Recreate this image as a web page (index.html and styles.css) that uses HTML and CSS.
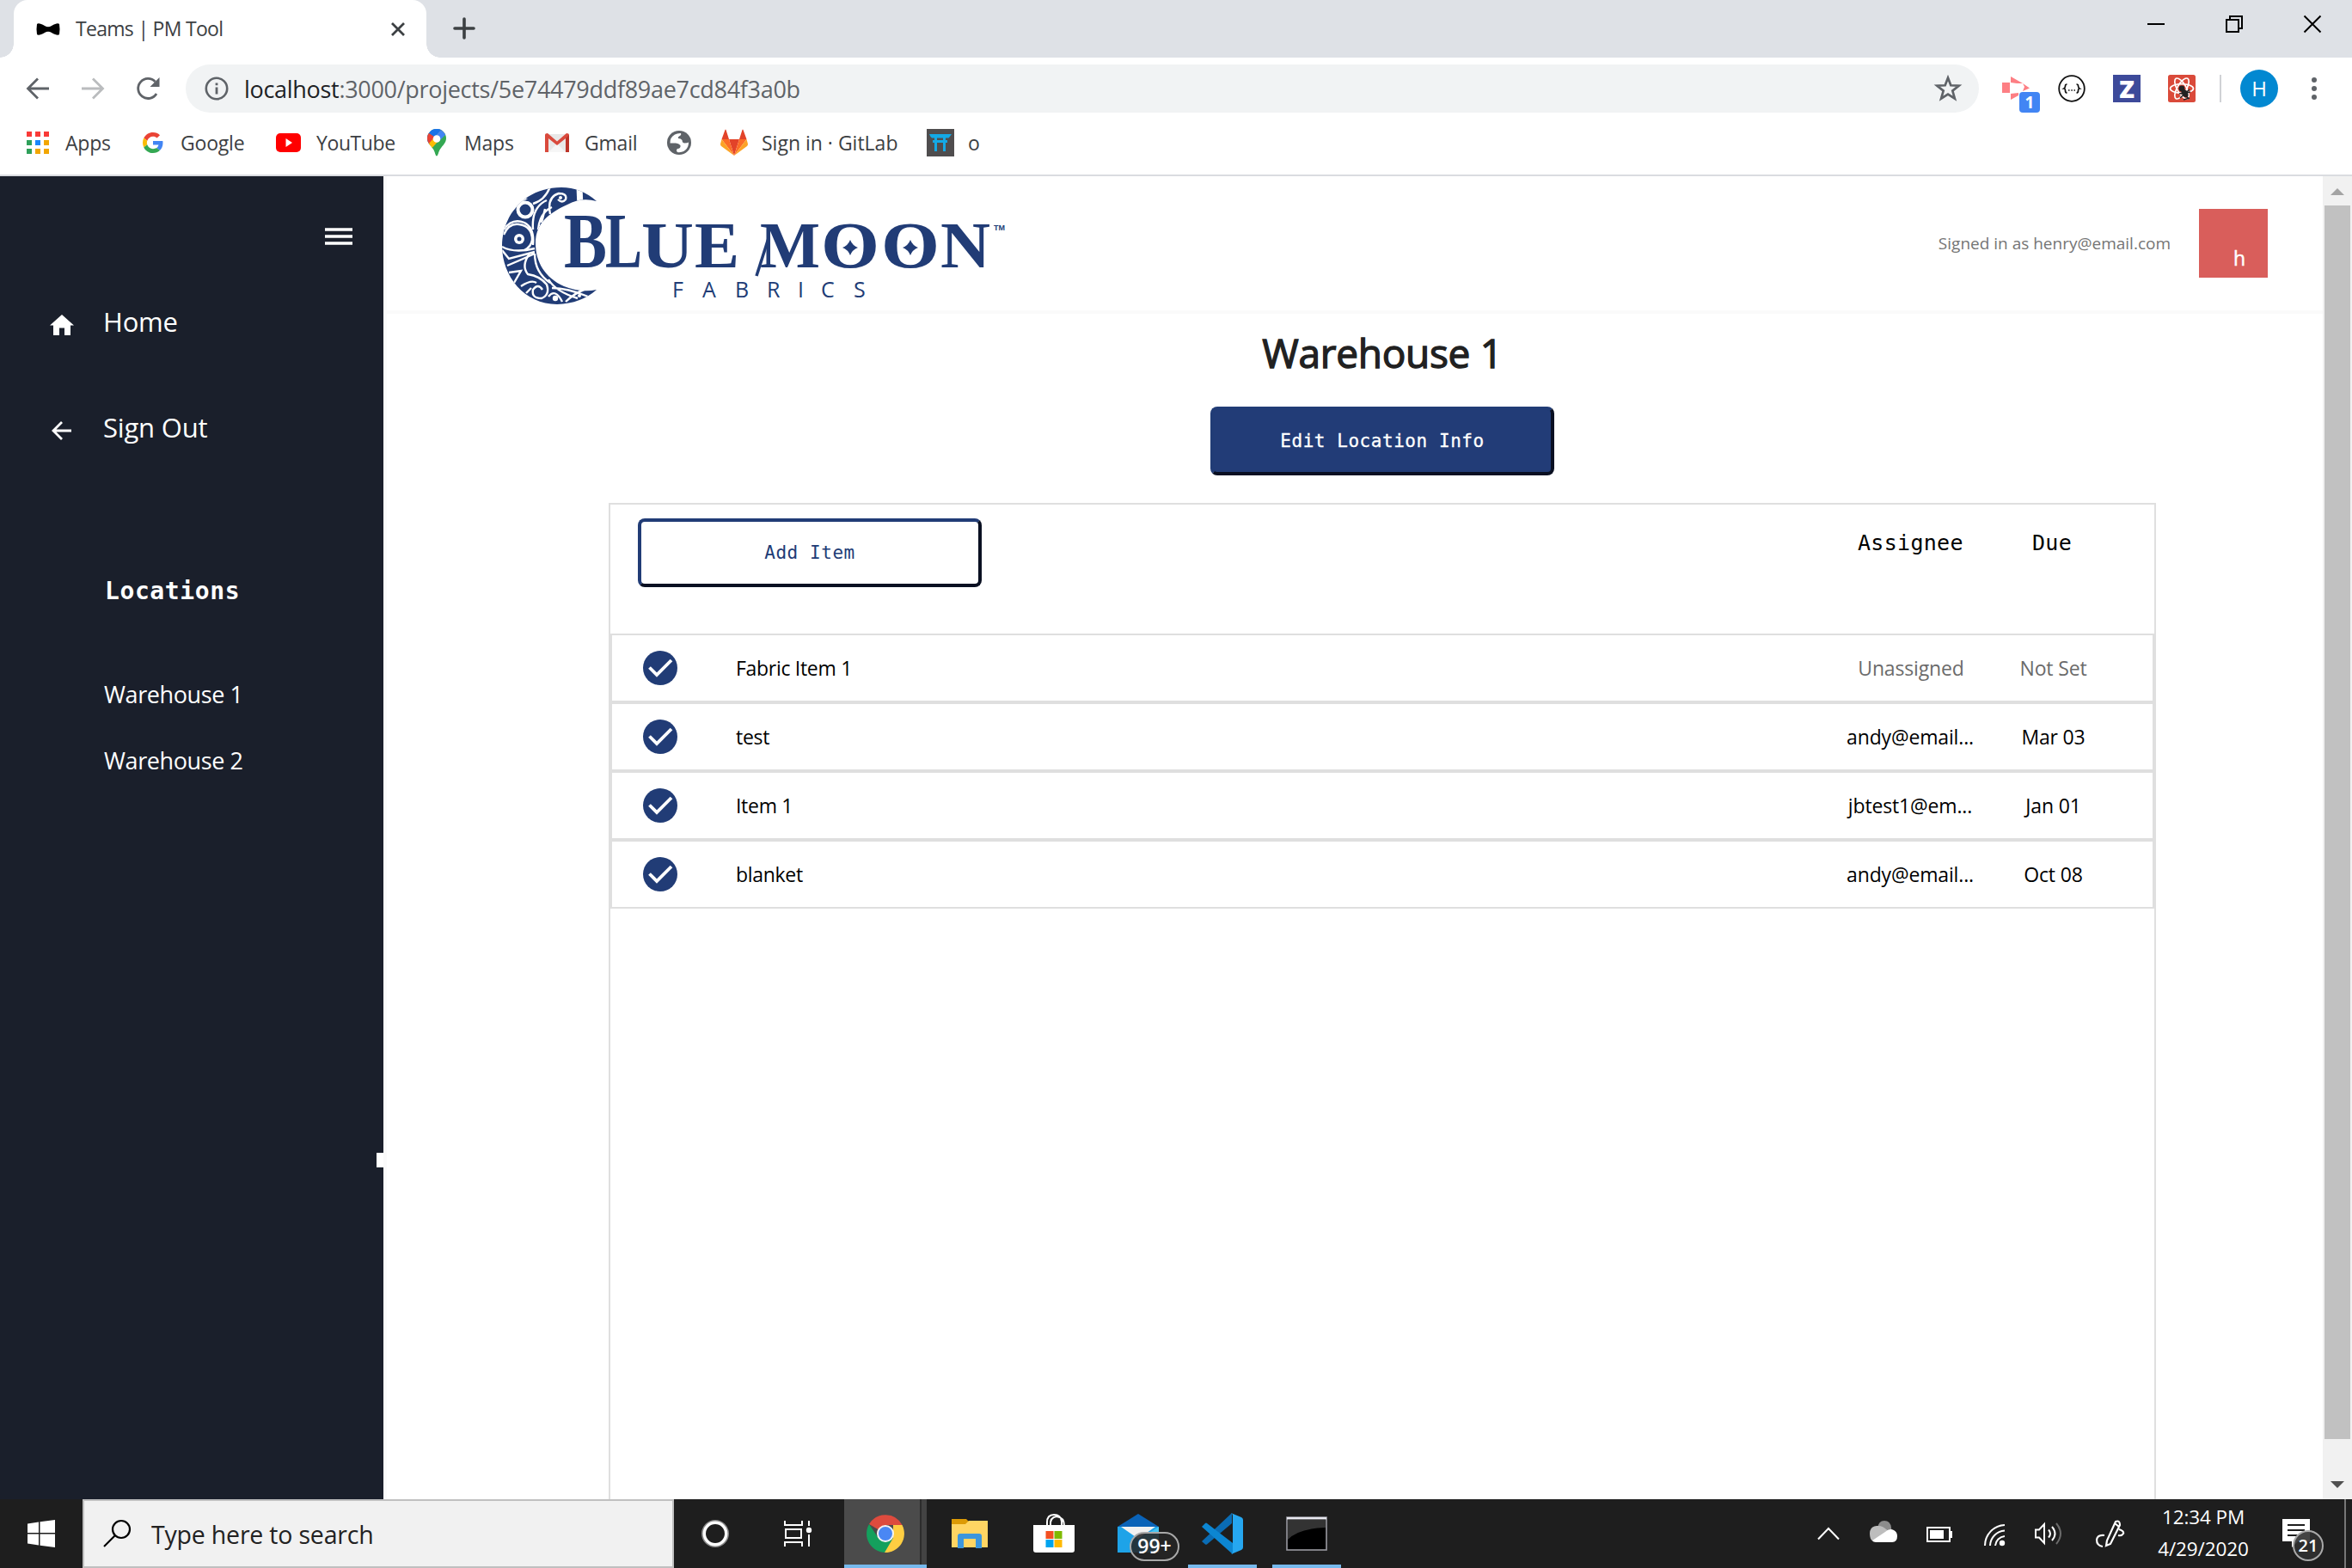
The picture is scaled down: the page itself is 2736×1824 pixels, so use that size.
FILE: index.html
```html
<!DOCTYPE html>
<html lang="en">
<head>
<meta charset="utf-8">
<title>Teams | PM Tool</title>
<link rel="stylesheet" href="styles.css">
</head>
<body>
<div class="screen">
  <div class="tabstrip">
    <div class="tab">
      <svg class="favicon" width="28" height="16" viewBox="0 0 28 16"><path d="M1 2Q0 8 1 14Q3 16 10 12Q14 9.500 18 12Q25 16 27 14Q28 8 27 2Q25 0 18 4Q14 6.500 10 4Q3 0 1 2Z" fill="#000"/></svg>
      <span class="tab-title">Teams | PM Tool</span>
      <svg class="tab-close" width="18" height="18" viewBox="0 0 18 18"><path d="M2 2L16 16M16 2L2 16" stroke="#3c4043" stroke-width="2.800"/></svg>
    </div>
    <svg class="new-tab" width="24" height="24" viewBox="0 0 24 24"><path d="M12 1V23M1 12H23" stroke="#3c4043" stroke-width="3.600" stroke-linecap="round"/></svg>
    <div class="window-controls">
      <svg width="20" height="20" viewBox="0 0 20 20"><path d="M0 10H20" stroke="#000" stroke-width="2"/></svg>
      <svg width="20" height="20" viewBox="0 0 20 20"><path d="M1 5H15V19H1ZM5 5V1H19V15H15" fill="none" stroke="#000" stroke-width="2"/></svg>
      <svg width="20" height="20" viewBox="0 0 20 20"><path d="M0.500 0.500L19.500 19.500M19.500 0.500L0.500 19.500" stroke="#000" stroke-width="2"/></svg>
    </div>
  </div>

  <div class="toolbar">
    <svg class="nav-icon" width="28" height="28" viewBox="0 0 28 28"><path d="M27 14H3M14 2.500L2.500 14L14 25.500" fill="none" stroke="#5f6368" stroke-width="2.800"/></svg>
    <svg class="nav-icon" width="28" height="28" viewBox="0 0 28 28"><path d="M1 14H25M14 2.500L25.500 14L14 25.500" fill="none" stroke="#babcbe" stroke-width="2.800"/></svg>
    <svg class="nav-icon" width="28" height="28" viewBox="0 0 28 28"><path d="M24 20A11.500 11.500 0 1 1 22.500 6" fill="none" stroke="#5f6368" stroke-width="2.800"/><path d="M27.500 1V12H16.500Z" fill="#5f6368"/></svg>
    <div class="omnibox">
      <svg width="28" height="28" viewBox="0 0 28 28"><circle cx="14" cy="14" r="12.200" fill="none" stroke="#5f6368" stroke-width="2.600"/><path d="M14 12.500V20.500M14 7.500V10.300" stroke="#5f6368" stroke-width="2.800"/></svg>
      <span class="url"><b>localhost</b>:3000/projects/5e74479ddf89ae7cd84f3a0b</span>
      <svg class="star" width="32" height="32" viewBox="0 0 32 32"><path d="M16 3.500L19.300 12.300L28.700 12.700L21.300 18.600L23.900 27.700L16 22.500L8.100 27.700L10.700 18.600L3.300 12.700L12.700 12.300Z" fill="none" stroke="#5f6368" stroke-width="2.700"/></svg>
    </div>
    <div class="extensions">
      <div class="ext ext-cast">
        <svg width="34" height="30" viewBox="0 0 34 30"><path d="M1 8H10V20H1ZM11 1L25 9L18 9L11 8ZM25 9L33 14.500L25 18L27 13ZM11 21L20 20L20 23L11 28Z" fill="#fd7f84"/></svg>
        <span class="ext-badge">1</span>
      </div>
      <svg class="ext" width="32" height="32" viewBox="0 0 32 32"><circle cx="16" cy="16" r="14.800" fill="none" stroke="#111" stroke-width="1.800"/><path d="M10.500 11Q8.500 11 8.500 13T7 16Q8.500 16 8.500 18.500T10.500 21M21.500 11Q23.500 11 23.500 13T25 16Q23.500 16 23.500 18.500T21.500 21" fill="none" stroke="#111" stroke-width="1.700"/><path d="M12 18h1.500M15.300 18h1.500M18.500 18h1.500" stroke="#111" stroke-width="1.500"/></svg>
      <span class="ext ext-z">Z</span>
      <svg class="ext" width="32" height="32" viewBox="0 0 32 32"><rect width="32" height="32" rx="2.500" fill="#da4a3a"/><g fill="none" stroke="#fff" stroke-width="1.700"><ellipse cx="16" cy="16" rx="13.500" ry="5.300"/><ellipse cx="16" cy="16" rx="13.500" ry="5.300" transform="rotate(60 16 16)"/><ellipse cx="16" cy="16" rx="13.500" ry="5.300" transform="rotate(120 16 16)"/></g><circle cx="16" cy="16" r="3.400" fill="#222"/><ellipse cx="19.500" cy="21.500" rx="3.400" ry="5.200" transform="rotate(-35 19.500 21.500)" fill="#222"/><path d="M13 22L26 20M14 27L25 17M18 29L25 27M17 19L24 28" stroke="#222" stroke-width="1.400"/></svg>
      <span class="ext-divider"></span>
      <span class="profile">H</span>
      <svg class="kebab" width="6" height="28" viewBox="0 0 6 28"><g fill="#5f6368"><circle cx="3" cy="4" r="3"/><circle cx="3" cy="14" r="3"/><circle cx="3" cy="24" r="3"/></g></svg>
    </div>
  </div>

  <div class="bookmarks">
    <div class="bm bm-apps"><svg width="26" height="26" viewBox="0 0 26 26"><path d="M0 0h6v6H0zM10 0h6v6h-6zM20 0h6v6h-6z" fill="#f93a37"/><path d="M0 10h6v6H0zM0 20h6v6H0z" fill="#2fa05a"/><path d="M10 10h6v6h-6z" fill="#1a87fb"/><path d="M20 10h6v6h-6zM10 20h6v6h-6zM20 20h6v6h-6z" fill="#f2a600"/></svg><span>Apps</span></div>
    <div class="bm bm-google"><svg width="24" height="24" viewBox="0 0 48 48"><path fill="#ea4335" d="M24 9.500c3.540 0 6.710 1.220 9.210 3.600l6.850-6.850C35.900 2.380 30.470 0 24 0 14.620 0 6.510 5.380 2.560 13.220l7.980 6.190C12.430 13.720 17.740 9.500 24 9.500z"/><path fill="#4285f4" d="M46.980 24.550c0-1.570-.15-3.090-.38-4.550H24v9.020h12.940c-.58 2.960-2.260 5.480-4.780 7.180l7.730 6c4.510-4.180 7.090-10.360 7.090-17.650z"/><path fill="#fbbc05" d="M10.530 28.590c-.48-1.450-.76-2.990-.76-4.590s.27-3.140.76-4.590l-7.980-6.190C.92 16.460 0 20.120 0 24s.92 7.540 2.560 10.780l7.970-6.190z"/><path fill="#34a853" d="M24 48c6.480 0 11.930-2.130 15.890-5.810l-7.730-6c-2.150 1.450-4.920 2.300-8.160 2.300-6.260 0-11.570-4.220-13.470-9.910l-7.980 6.190C6.510 42.620 14.620 48 24 48z"/></svg><span>Google</span></div>
    <div class="bm bm-youtube"><svg width="29" height="22" viewBox="0 0 29 22"><rect width="29" height="22" rx="5" fill="#f00"/><path d="M11.500 6L19 11L11.500 16Z" fill="#fff"/></svg><span>YouTube</span></div>
    <div class="bm bm-maps"><svg width="22" height="32" viewBox="0 0 22 32"><clipPath id="pin"><path d="M11 0A11 11 0 0 0 0 11C0 16 4 19 7 23.500C9 26.500 9.500 31.500 11 31.500S13 26.500 15 23.500C18 19 22 16 22 11A11 11 0 0 0 11 0Z"/></clipPath><g clip-path="url(#pin)"><path d="M0 0H22V32H0Z" fill="#34a853"/><path d="M0 22L22 -4H0Z" fill="#1a73e8"/><path d="M-2 2L8 9L4 18H-2Z" fill="#ea4335"/><path d="M1 18L18 -1H22V4L3 25Z" fill="#fbbc04"/><path d="M2.500 3L9 9L17 0H5Z" fill="#1a73e8"/><path d="M17 0L10 8L14 14L24 4V0Z" fill="#4285f4"/></g><circle cx="11" cy="11.500" r="4.300" fill="#fff"/></svg><span>Maps</span></div>
    <div class="bm bm-gmail"><svg width="28" height="22" viewBox="0 0 28 22"><rect x="1" y="1" width="26" height="21" fill="#e8e8e8"/><path d="M4 22L14 12L24 22Z" fill="#f6f6f6"/><path d="M0 2Q0 0 3 0L14 9.500L25 0Q28 0 28 2V22H24V6L14 14L4 6V22H0Z" fill="#d94a3d"/><path d="M24 6L28 2V22H24Z" fill="#bd3429"/></svg><span>Gmail</span></div>
    <div class="bm bm-globe"><svg width="28" height="28" viewBox="0 0 28 28"><circle cx="14" cy="14" r="14" fill="#5f6368"/><path d="M16 3Q17 5 14 6.500Q12 7.500 13 9Q16 9 17.500 11Q17.500 14 20 14.500Q24 14.500 25 13.500A11 11 0 0 1 12 25Q10 23 12 21Q16 21 15.500 17Q13 14 9 14.500L3.500 14.500Q3 8 9 4.500Q12 2.800 16 3Z" fill="#fff"/></svg></div>
    <div class="bm bm-gitlab"><svg width="32" height="30" viewBox="0 0 32 30"><path d="M16 30L10 11H22Z" fill="#e24329"/><path d="M16 30L10 11H1.500ZM16 30L22 11H30.500Z" fill="#fc6d26"/><path d="M1.500 11L0 16.500Q0 18 1 19L16 30ZM30.500 11L32 16.500Q32 18 31 19L16 30Z" fill="#fca326"/><path d="M1.500 11L5.500 0Q6 -1 6.500 0L10 11ZM30.500 11L26.500 0Q26 -1 25.500 0L22 11Z" fill="#e24329"/></svg><span>Sign in · GitLab</span></div>
    <div class="bm bm-o"><svg width="32" height="32" viewBox="0 0 32 32"><rect width="32" height="32" fill="#4f4d4e"/><path d="M3 6H29Q27 9 25.500 10.500H22V13H24V16H22V26H19V16H12V26H9V16H7V13H9V10.500H6Q4 9 3 6ZM12 10.500V13H19V10.500Z" fill="#14a9e5" fill-rule="evenodd"/></svg><span>o</span></div>
  </div>

  <div class="viewport">
    <aside class="sidebar">
      <svg class="burger" width="32" height="20" viewBox="0 0 32 20"><path d="M0 2H32M0 10H32M0 18H32" stroke="#fff" stroke-width="3.600"/></svg>
      <a class="side-link"><svg width="28" height="24" viewBox="0 0 28 24"><path d="M14 0L28 12.500H24V24H17V15.500H11V24H4V12.500H0Z" fill="#fff"/></svg><span>Home</span></a>
      <a class="side-link"><svg width="28" height="24" viewBox="0 0 28 24"><path d="M25 12H5M14 2L4 12L14 22" fill="none" stroke="#fff" stroke-width="2.800"/></svg><span>Sign Out</span></a>
      <h2 class="side-title">Locations</h2>
      <a class="side-loc">Warehouse 1</a>
      <a class="side-loc">Warehouse 2</a>
      <span class="handle"></span>
    </aside>

    <main class="main">
      <header class="header">
        <svg class="logo" width="600" height="140" viewBox="0 0 600 140">
          <clipPath id="crescent"><path d="M110 17Q92 1 69 1C26 1 0 34 0 69S26 137 64 137Q92 136 110 120Q92 124 72 116C50 106 39 88 39 66S52 32 76 21Q92 12 110 17Z"/></clipPath>
          <g clip-path="url(#crescent)">
            <rect width="112" height="140" fill="#213c76"/>
            <g fill="none" stroke="#fff" stroke-width="2.400">
              <circle cx="27" cy="27" r="8.500" stroke-width="4"/>
              <path d="M2 56Q8 42 20 44Q35 46 35 62Q34 70 26 74"/>
              <path d="M2 50Q12 36 26 42Q38 48 36 68M0 70Q14 78 38 72M0 74L8 84L38 76M6 92L20 86L38 78"/>
              <path d="M56 0Q50 16 36 20M56 32Q52 12 66 8Q76 8 74 15Q70 20 65 15M52 16Q34 24 36 50M58 24Q44 30 42 50M50 26L46 42"/>
              <path d="M32 78Q22 92 30 102Q44 104 52 114Q56 126 46 130Q34 130 36 120Q42 112 47 120M38 78Q38 100 56 112M8 100L22 98L14 112M22 116Q34 108 40 112M28 124L34 118"/>
              <path d="M54 108Q62 122 88 130M58 118Q76 118 100 128M54 128Q62 118 70 134M74 134Q84 124 98 119"/>
              <path d="M90 0L91 24" stroke-width="7"/>
            </g>
            <g fill="#fff"><circle cx="20" cy="61" r="6"/><circle cx="68" cy="13" r="2"/><circle cx="62" cy="130" r="3.200"/><circle cx="90" cy="127" r="2"/><path d="M14 12L30 14L20 20L8 34Z"/></g>
            <circle cx="20" cy="61" r="2.500" fill="#213c76"/>
          </g>
          <g class="logo-word">
            <text x="72" y="94" font-size="92" textLength="50" lengthAdjust="spacingAndGlyphs">B</text>
            <text x="120" y="94" font-size="92" textLength="43" lengthAdjust="spacingAndGlyphs">L</text>
            <text x="162" y="94" font-size="76" textLength="61" lengthAdjust="spacingAndGlyphs">U</text>
            <text x="224" y="94" font-size="76" textLength="52" lengthAdjust="spacingAndGlyphs">E</text>
            <text x="300" y="94" font-size="76" textLength="70" lengthAdjust="spacingAndGlyphs">M</text>
            <text x="371" y="94" font-size="76" textLength="68" lengthAdjust="spacingAndGlyphs">O</text>
            <text x="441" y="94" font-size="76" textLength="68" lengthAdjust="spacingAndGlyphs">O</text>
            <text x="510" y="94" font-size="76" textLength="58" lengthAdjust="spacingAndGlyphs">N</text>
          </g>
          <path d="M405 62Q407.500 68.500 414 71Q407.500 73.500 405 80Q402.500 73.500 396 71Q402.500 68.500 405 62ZM475 62Q477.500 68.500 484 71Q477.500 73.500 475 80Q472.500 73.500 466 71Q472.500 68.500 475 62Z" fill="#213c76"/>
          <path d="M310 60L296 104" stroke="#213c76" stroke-width="3.500"/>
          <text class="logo-sub" x="198 233 271 308 344 371 409" y="129">FABRICS</text>
          <text class="logo-tm" x="572" y="51">TM</text>
        </svg>
        <div class="account"><span class="signed">Signed in as henry@email.com</span><span class="user">h</span></div>
      </header>
      <div class="content">
        <h1 class="title">Warehouse 1</h1>
        <button class="btn btn-edit">Edit Location Info</button>
        <section class="board">
          <div class="board-head">
            <button class="btn btn-add">Add Item</button>
            <span class="head-assignee">Assignee</span>
            <span class="head-due">Due</span>
          </div>
          <div class="row muted"><svg class="check" viewBox="0 0 40 40"><circle cx="20" cy="20" r="20" fill="#213c76"/><path d="M7.500 19.500L16 28L33 11" fill="none" stroke="#fff" stroke-width="3.800"/></svg><span class="name">Fabric Item 1</span><span class="who">Unassigned</span><span class="due">Not Set</span></div>
          <div class="row"><svg class="check" viewBox="0 0 40 40"><circle cx="20" cy="20" r="20" fill="#213c76"/><path d="M7.500 19.500L16 28L33 11" fill="none" stroke="#fff" stroke-width="3.800"/></svg><span class="name">test</span><span class="who">andy@email...</span><span class="due">Mar 03</span></div>
          <div class="row"><svg class="check" viewBox="0 0 40 40"><circle cx="20" cy="20" r="20" fill="#213c76"/><path d="M7.500 19.500L16 28L33 11" fill="none" stroke="#fff" stroke-width="3.800"/></svg><span class="name">Item 1</span><span class="who">jbtest1@em...</span><span class="due">Jan 01</span></div>
          <div class="row"><svg class="check" viewBox="0 0 40 40"><circle cx="20" cy="20" r="20" fill="#213c76"/><path d="M7.500 19.500L16 28L33 11" fill="none" stroke="#fff" stroke-width="3.800"/></svg><span class="name">blanket</span><span class="who">andy@email...</span><span class="due">Oct 08</span></div>
        </section>
      </div>
    </main>

    <div class="scrollbar">
      <svg width="16" height="8" viewBox="0 0 16 8"><path d="M0 8L8 0L16 8Z" fill="#a3a3a3"/></svg>
      <div class="thumb"></div>
      <svg width="16" height="8" viewBox="0 0 16 8"><path d="M0 0H16L8 8Z" fill="#505050"/></svg>
    </div>
  </div>

  <footer class="taskbar">
    <div class="start"><svg width="32" height="32" viewBox="0 0 32 32"><path d="M0 4.500L13 2.500V15H0ZM14.500 2.300L32 0V15H14.500ZM0 16.500H13V29.500L0 27.500ZM14.500 16.500H32V32L14.500 29.700Z" fill="#fff"/></svg></div>
    <div class="search"><svg width="32" height="32" viewBox="0 0 32 32"><circle cx="21" cy="11" r="10" fill="none" stroke="#000" stroke-width="2.200"/><path d="M13.500 18.500L1 31" stroke="#000" stroke-width="2.200"/></svg><span>Type here to search</span></div>
    <div class="task task-cortana"><svg width="32" height="32" viewBox="0 0 32 32"><circle cx="16" cy="16" r="14.500" fill="none" stroke="#8a8a8a" stroke-width="3"/><circle cx="16" cy="16" r="12.700" fill="none" stroke="#fff" stroke-width="3.400"/></svg></div>
    <div class="task task-view"><svg width="34" height="32" viewBox="0 0 34 32"><path d="M1 1V6H21V1M1 31V26H21V31M2 11H20V21H2ZM29 1V7M29 17V31" fill="none" stroke="#fff" stroke-width="2"/><circle cx="29" cy="12" r="3.200" fill="#fff"/></svg></div>
    <div class="task task-chrome open"><svg width="44" height="44" viewBox="0 0 44 44"><path d="M22 22L3 11A22 22 0 0 1 41.500 12H22Z" fill="#dd4b3e"/><path d="M3 11A22 22 0 0 0 22 44L31 27L22 22L13 26Z" fill="#14a05d"/><path d="M41.500 12A22 22 0 0 1 21 44L31 27V12Z" fill="#ffce42"/><circle cx="22" cy="22" r="10" fill="#f4f4f4"/><circle cx="22" cy="22" r="8" fill="#4a87f4"/></svg></div>
    <div class="task task-folder"><svg width="42" height="36" viewBox="0 0 42 36"><path d="M0 1H17L20 4V8H0Z" fill="#dc9a05"/><path d="M0 7H16L20 3H42V34H0Z" fill="#ffd563"/><path d="M7 34V21Q7 18 10 18H32Q35 18 35 21V35H28V24H14V35H7Z" fill="#3c96dd"/></svg></div>
    <div class="task task-store"><svg width="48" height="46" viewBox="0 0 48 46"><path d="M16 14V10Q16 1 24 1T33 9V14M20 14Q19 4 27 3Q36 4 36 14" fill="none" stroke="#fff" stroke-width="2"/><path d="M0 13H48V42Q48 45 45 45H3Q0 45 0 42Z" fill="#fff"/><path d="M14.500 20h9v9h-9z" fill="#f25022"/><path d="M24.500 20h9v9h-9z" fill="#7fba00"/><path d="M14.500 30h9v9h-9z" fill="#00a4ef"/><path d="M24.500 30h9v9h-9z" fill="#ffb900"/></svg></div>
    <div class="task task-mail"><svg width="48" height="46" viewBox="0 0 48 46"><path d="M0 15L24 0L48 15Z" fill="#0a63b8"/><path d="M0 15H48V45H0Z" fill="#1ea3e8"/><path d="M48 15V45L24 30Z" fill="#45c5f3"/><path d="M4 15H44L24 29Z" fill="#f1f1f1"/></svg><span class="mail-badge">99+</span></div>
    <div class="task task-code open"><svg width="48" height="48" viewBox="0 0 48 48"><path d="M0 33L35 0V12L6 36.500Q5 37 4 36.500L0 33Z" fill="#0a6cb4"/><path d="M4 12Q5 11 6 12L36 35V48L0 16Z" fill="#0c86d2"/><path d="M34 0L46 5Q48 6 48 8V40Q48 42 46 43L34 48Q36 47 36 45V3Q36 1 34 0Z" fill="#26a7f0"/></svg></div>
    <div class="task task-cmd open"><svg width="48" height="40" viewBox="0 0 48 40"><rect x="1" y="1" width="46" height="38" fill="#000" stroke="#9a9aa2" stroke-width="1.600"/><path d="M1 1H47V3.500H1Z" fill="#e8e8f0"/><path d="M2 4H46V13Q14 14 2 27Z" fill="#333"/></svg></div>
    <div class="tray">
      <svg class="t-chev" width="26" height="16" viewBox="0 0 26 16"><path d="M1 14.500L13 2L25 14.500" fill="none" stroke="#fff" stroke-width="2"/></svg>
      <svg class="t-cloud" width="32" height="26" viewBox="0 0 32 26"><path d="M9 9Q10 0 17 0Q24 0 25 8L26 15H9Z" fill="#8c8c8c"/><path d="M8 6Q0 7 0 15Q0 22 4 24L22 13Q16 5 8 6Z" fill="#bdbdbd"/><path d="M3 23L18 13Q23 8 28 11Q32 13 32 18Q32 25 26 25H7Q4 25 3 23Z" fill="#fff"/></svg>
      <svg class="t-batt" width="30" height="18" viewBox="0 0 30 18"><path d="M1 1H27V17H1Z" fill="none" stroke="#fff" stroke-width="2"/><path d="M4 4H20V14H4ZM28 5H30V13H28Z" fill="#fff"/></svg>
      <svg class="t-wifi" width="25" height="26" viewBox="0 0 25 26"><path d="M1 25A24 24 0 0 1 24 1M7 25A18 18 0 0 1 24 7.500M13 25A12 12 0 0 1 24 14" fill="none" stroke="#fff" stroke-width="2"/><circle cx="21" cy="22" r="3.200" fill="#fff"/></svg>
      <svg class="t-vol" width="32" height="28" viewBox="0 0 32 28"><path d="M1 9.500H5L11 3V25L5 18.500H1Z" fill="none" stroke="#fff" stroke-width="2"/><path d="M16 9.500Q20 14 16 18.500M20 6Q27 14 20 22" fill="none" stroke="#fff" stroke-width="2"/><path d="M25 2Q35 14 25 26" fill="none" stroke="#6b6b6b" stroke-width="2"/></svg>
      <svg class="t-pen" width="34" height="34" viewBox="0 0 34 34"><path d="M10 19Q2 18 1 24Q1 31 8 32M13 25L12 31L17 29L28 7Q28 1 23 3ZM22 5L27 9M27 12Q33 14 32 17Q30 20 26 19" fill="none" stroke="#fff" stroke-width="2.200"/></svg>
      <div class="clock"><span>12:34 PM</span><span>4/29/2020</span></div>
      <div class="notes"><svg width="32" height="34" viewBox="0 0 32 34"><path d="M0 0H32V26H18L11 33V26H0Z" fill="#fff"/><path d="M6 7H26M6 13H26M6 19H20" stroke="#1e1e1e" stroke-width="2"/></svg><span class="note-badge">21</span></div>
      <span class="show-desktop"></span>
    </div>
  </footer>
</div>
</body>
</html>
```
FILE: styles.css
```css
* { box-sizing: border-box; }
body { margin: 0; background: #fff; font-family: "Open Sans", "Noto Sans", sans-serif; color: #000; }
svg { display: block; flex: none; overflow: visible; }
span, a, h1, h2 { white-space: nowrap; }
.screen { width: 2736px; height: 1824px; display: flex; flex-direction: column; overflow: hidden; }

/* browser frame */
.tabstrip { height: 67px; flex: none; background: #dee1e6; display: flex; align-items: flex-start; }
.tab { position: relative; width: 480px; height: 67px; margin-left: 16px; background: #fff; border-radius: 16px 16px 0 0; display: flex; align-items: center; padding: 0 24px 0 26px; }
.tab::before, .tab::after { content: ""; position: absolute; bottom: 0; width: 16px; height: 16px; }
.tab::before { left: -16px; background: radial-gradient(circle at 0 0, transparent 15.500px, #fff 16px); }
.tab::after { right: -16px; background: radial-gradient(circle at 100% 0, transparent 15.500px, #fff 16px); }
.tab-title { margin-left: 18px; font-size: 23px; letter-spacing: -.7px; color: #3c4043; line-height: 30px; margin-top: -2px; }
.tab-close { margin-left: auto; }
.new-tab { margin: 21px 0 0 32px; }
.window-controls { margin: 18px 36px 0 auto; display: flex; gap: 71px; }

.toolbar { height: 72px; flex: none; display: flex; align-items: center; padding-left: 30px; }
.nav-icon { margin-right: 36px; }
.nav-icon:nth-child(3) { margin-right: 30px; }
.omnibox { width: 2086px; height: 56px; border-radius: 28px; background: #f1f3f4; display: flex; align-items: center; padding: 0 20px 0 22px; }
.url { margin-left: 18px; font-size: 27px; letter-spacing: -.3px; color: #5f6368; }
.url b { font-weight: 400; color: #202124; }
.star { margin-left: auto; }
.extensions { display: flex; align-items: center; margin-left: -1px; }
.ext { margin-left: 32px; }
.ext-cast { position: relative; width: 34px; margin-left: 27px; }
.ext-badge { position: absolute; left: 21px; top: 19px; width: 24px; height: 24px; border-radius: 4px; background: #4285f4; color: #fff; font-size: 19px; font-weight: 700; line-height: 25px; text-align: center; }
.ext-z { width: 32px; height: 32px; background: #3d4a9a; color: #fff; font-weight: 800; font-size: 29px; line-height: 31px; text-align: center; }
.ext-divider { width: 2px; height: 32px; background: #d0d2d5; margin-left: 28px; }
.profile { width: 44px; height: 44px; border-radius: 50%; background: #0288d1; color: #fff; margin-left: 22px; font-size: 24px; line-height: 44px; text-align: center; }
.kebab { margin-left: 39px; }

.bookmarks { height: 66px; flex: none; padding-bottom: 10px; border-bottom: 2px solid #dadce0; display: flex; align-items: center; font-size: 23px; letter-spacing: -.2px; color: #3c4043; }
.bm { display: flex; align-items: center; height: 54px; flex: none; }
.bm-apps { padding-left: 31px; width: 166px; gap: 19px; }
.bm-google { width: 155px; gap: 20px; }
.bm-youtube { width: 176px; gap: 18px; letter-spacing: -.4px; }
.bm-maps { width: 137px; gap: 21px; }
.bm-gmail { width: 142px; gap: 18px; }
.bm-globe { width: 62px; }
.bm-gitlab { width: 240px; gap: 16px; letter-spacing: 0; }
.bm-o { gap: 16px; }

/* page */
.viewport { height: 1539px; flex: none; display: flex; overflow: hidden; }
.sidebar { position: relative; width: 446px; flex: none; background: #1a1f2b; color: #fff; display: flex; flex-direction: column; }
.burger { align-self: flex-end; margin: 60px 36px 0 0; }
.side-link { height: 60px; display: flex; align-items: center; padding-left: 58px; font-size: 31px; letter-spacing: -.2px; }
.side-link svg { margin: 7px 34px 0 0; }
.burger + .side-link { margin-top: 59px; }
.side-link + .side-link { margin-top: 63px; }
.side-title { margin: 141px 0 0 122px; font: 700 28px/40px "DejaVu Sans Mono", monospace; letter-spacing: .6px; }
.side-loc { margin-left: 121px; height: 77px; line-height: 77px; font-size: 27px; letter-spacing: -.4px; }
.side-title + .side-loc { margin-top: 61px; }
.handle { position: absolute; right: 0; top: 1136px; width: 8px; height: 17px; background: #fff; }

.main { width: 2256px; flex: none; border-left: 4px solid #fafafa; display: flex; flex-direction: column; }
.header { width: 100%; height: 160px; flex: none; border-bottom: 4px solid #fafafa; display: flex; justify-content: space-between; padding-right: 64px; }
.logo { margin: 12px 0 0 134px; }
.logo-word { font-family: "Liberation Serif", serif; font-weight: 700; fill: #213c76; }
.logo-sub { font: 400 25px "Open Sans", sans-serif; fill: #213c76; }
.logo-tm { font: 700 9px "Liberation Sans", sans-serif; fill: #213c76; }
.account { display: flex; align-items: center; gap: 33px; }
.signed { font-size: 19px; color: #757575; }
.user { width: 80px; height: 80px; background: #d95e5b; color: #fff; font-size: 23px; line-height: 30px; padding: 42px 0 0 14px; text-align: center; -webkit-text-stroke: .5px; }
.content { display: flex; flex-direction: column; align-items: center; padding-left: 64px; }
.title { margin: 15px 0 0; font-size: 46px; font-weight: 400; line-height: 60px; letter-spacing: -.3px; color: #212121; -webkit-text-stroke: 1.300px #212121; }
.btn { width: 400px; height: 80px; flex: none; padding: 0; border: 4px solid; border-color: #213c76 #0a1022 #0a1022 #213c76; border-radius: 8px; font: 400 21px/30px "DejaVu Sans Mono", monospace; letter-spacing: .55px; }
.btn-edit { margin-top: 33px; background: #223c77; color: #fff; -webkit-text-stroke: .3px; }
.btn-add { background: #fff; color: #213c76; }
.board { width: 1800px; height: 1200px; flex: none; margin-top: 32px; border: 2px solid #dfdfdf; }
.board-head { height: 150px; display: flex; padding: 16px 0 0 32px; font: 400 25px/34px "DejaVu Sans Mono", monospace; letter-spacing: .3px; }
.head-assignee { margin: 12px 0 0 1019px; width: 124px; }
.head-due { margin: 12px 0 0 79px; }
.row { height: 80px; border: 2px solid #dfdfdf; display: grid; grid-template-columns: 108px 1fr 150px 170px; align-items: center; padding: 0 37px 0 36px; font-size: 23px; line-height: 32px; letter-spacing: -.15px; }
.check { width: 40px; height: 40px; }
.name { letter-spacing: -.3px; }
.who, .due { text-align: center; }
.due { padding-left: 13px; }
.muted .who, .muted .due { color: #6b6b6b; }
.muted .who { padding-left: 2px; }
.scrollbar { width: 34px; flex: none; background: #f1f1f1; display: flex; flex-direction: column; align-items: center; padding: 14px 0 13px; justify-content: space-between; }
.thumb { width: 30px; height: 1435px; margin-bottom: 37px; background: #c1c1c1; }

/* taskbar */
.taskbar { height: 80px; flex: none; background: #1e1e1e; display: flex; color: #fff; }
.taskbar > div { flex: none; }
.start { width: 96px; display: flex; align-items: center; justify-content: center; }
.search { width: 688px; border: 2px solid #c0c0c0; background: #f1f1f1; color: #222; display: flex; align-items: center; padding-left: 22px; gap: 24px; font-size: 28.500px; letter-spacing: -.2px; }
.search span { margin-top: 2px; }
.task { position: relative; display: flex; align-items: center; justify-content: center; width: 96px; }
.task.open { border-bottom: 4px solid #76b9ed; padding-top: 4px; }
.task-view { padding-left: 2px; }
.task-chrome { margin-left: 6px; background: linear-gradient(90deg, #4b4b4b 88px, #2c2c2c 88px, #2c2c2c 90px, #434343 90px); padding-right: 0; }
.task-folder { margin-left: 2px; }
.task-store { margin-left: 2px; }
.task-mail { margin-left: 2px; }
.mail-badge { position: absolute; left: 38px; top: 38px; width: 58px; height: 34px; border: 2px solid #a9a9a9; border-radius: 17px; background: rgba(38, 38, 38, .88); font-size: 23px; font-weight: 600; line-height: 29px; text-align: center; }
.task-code { width: 80px; margin-left: 10px; }
.task-cmd { width: 80px; margin-left: 18px; }
.tray { display: flex; align-items: center; margin-left: 554px; position: relative; }
.t-cloud { margin: -4px 0 0 35px; }
.t-batt { margin: 2px 0 0 34px; }
.t-wifi { margin: 4px 0 0 37px; }
.t-vol { margin-left: 34px; }
.t-pen { margin-left: 39px; }
.clock { width: 130px; margin-left: 26px; display: flex; flex-direction: column; align-items: center; font-size: 22.500px; line-height: 37px; margin-top: -2px; letter-spacing: -.1px; }
.notes { position: relative; width: 32px; margin-left: 27px; }
.note-badge { position: absolute; left: 12px; top: 13px; width: 36px; height: 36px; border-radius: 50%; border: 2px solid #a9a9a9; background: rgba(48, 48, 48, .9); font-size: 20px; font-weight: 600; line-height: 32px; text-align: center; }
.show-desktop { width: 2px; height: 80px; background: #777; margin-left: 40px; }
```
